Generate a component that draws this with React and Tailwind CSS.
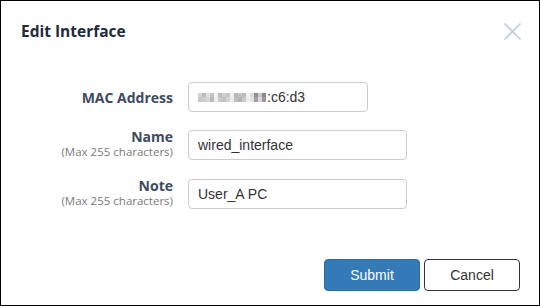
import React from "react";

const mosaic = [
  ["#d4d4d4", "#c8c8c8"],
  ["#bdbdbd", "#cfcfcf"],
  ["#e0e0e0", "#d6d6d6"],
  ["#c4c4c4", "#b9b9b9"],
  ["#f2f2f2", "#eeeeee"],
  ["#bcbcbc", "#cbcbcb"],
  ["#d0d0d0", "#c2c2c2"],
  ["#c6c6c6", "#d5d5d5"],
  ["#f0f0f0", "#ececec"],
  ["#b8b8b8", "#c0c0c0"],
  ["#c2c2c2", "#b5b5b5"],
  ["#bdbdbd", "#c9c9c9"],
  ["#f1f1f1", "#eeeeee"],
  ["#dcdcdc", "#e4e4e4"],
  ["#8f8f8f", "#a0a0a0"],
  ["#c8c8c8", "#d8d8d8"],
  ["#8a8a8a", "#9a9a9a"],
];

function Mosaic() {
  return (
    <span className="inline-flex h-[9px] mr-[1px]">
      {mosaic.map((c, i) => (
        <span key={i} className="flex flex-col w-[4px]">
          <span className="h-[4.5px]" style={{ background: c[0] }} />
          <span className="h-[4.5px]" style={{ background: c[1] }} />
        </span>
      ))}
    </span>
  );
}

function Label({ title, sub }) {
  return (
    <div className="w-[172px] shrink-0 text-right">
      <div className="text-[14px] leading-[15px] font-bold text-[#3d4b5f] font-['Open_Sans',sans-serif]">
        {title}
      </div>
      {sub && (
        <div className="mt-[1px] text-[11.5px] leading-[14px] text-[#7a7a7a] font-['Open_Sans',sans-serif]">
          {sub}
        </div>
      )}
    </div>
  );
}

function Field({ width, children }) {
  return (
    <div
      className={`${width} h-[30px] border border-[#cccccc] rounded-[4px] px-[9px] flex items-center text-[14px] text-[#333] font-['Liberation_Sans',Arial,sans-serif]`}
    >
      {children}
    </div>
  );
}

export default function App() {
  return (
    <div className="w-[540px] h-[306px] border border-black bg-white flex flex-col font-['Open_Sans',sans-serif]">
      <div className="flex items-center justify-between pl-[20px] pr-[17px] pt-[20px] h-[40px]">
        <div className="text-[15.5px] leading-[20px] font-bold text-[#232c3b]">
          Edit Interface
        </div>
        <svg width="19" height="19" viewBox="0 0 19 19" className="block">
          <path d="M1.5 1.5 L17.5 17.5 M17.5 1.5 L1.5 17.5" stroke="#c3cbd7" strokeWidth="1.6" fill="none" />
        </svg>
      </div>

      <div className="mt-[41px] flex flex-col">
        <div className="flex items-center h-[30px] gap-[15px]">
          <Label title="MAC Address" />
          <Field width="w-[180px]">
            <Mosaic />
            <span>:c6:d3</span>
          </Field>
        </div>
        <div className="flex items-start h-[30px] gap-[15px] mt-[18px]">
          <div className="-mt-[1px]">
            <Label title="Name" sub="(Max 255 characters)" />
          </div>
          <Field width="w-[219px]">wired_interface</Field>
        </div>
        <div className="flex items-start h-[30px] gap-[15px] mt-[19px]">
          <div className="-mt-[1px]">
            <Label title="Note" sub="(Max 255 characters)" />
          </div>
          <Field width="w-[219px]">User_A PC</Field>
        </div>
      </div>

      <div className="mt-auto flex justify-end gap-[4px] pr-[19px] pb-[14px]">
        <button className="w-[96px] h-[32px] rounded-[4px] bg-[#337ab7] border border-[#2e6da4] text-white text-[14px] font-['Liberation_Sans',Arial,sans-serif]">
          Submit
        </button>
        <button className="w-[96px] h-[32px] rounded-[4px] bg-white border border-[#333] text-[#333] text-[14px] font-['Liberation_Sans',Arial,sans-serif]">
          Cancel
        </button>
      </div>
    </div>
  );
}
